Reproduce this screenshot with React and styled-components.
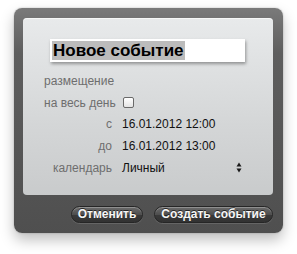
import styled, { createGlobalStyle } from "styled-components";

const GlobalStyle = createGlobalStyle`
  html, body {
    margin: 0;
    padding: 0;
    background: #ffffff;
  }
  body {
    font-family: "Liberation Sans", Arial, sans-serif;
  }
`;

const Stage = styled.div`
  width: 297px;
  height: 254px;
  padding: 8px 0 0 14px;
  box-sizing: border-box;
`;

const Sheet = styled.div`
  width: 269px;
  height: 225px;
  box-sizing: border-box;
  padding: 10px 10px 0 9px;
  border-radius: 8px;
  background: linear-gradient(#7a7a7a, #5e5e5e 20%, #4f4f4f);
  box-shadow: 0 7px 14px rgba(0, 0, 0, 0.25), 0 0 2px rgba(0, 0, 0, 0.25);
  display: flex;
  flex-direction: column;
`;

const Panel = styled.div`
  height: 177px;
  box-sizing: border-box;
  padding: 21px 28px 0 21px;
  border-radius: 4px;
  background: linear-gradient(#e8eaeb, #d4d6d7 60%, #c9cbcc);
  box-shadow: inset 0 1px 0 rgba(255, 255, 255, 0.6);
`;

const TitleField = styled.div`
  margin-left: 6px;
  height: 23px;
  background: #ffffff;
  box-shadow: 1px 2px 3px rgba(0, 0, 0, 0.35);
  display: flex;
  align-items: center;
  padding-left: 2px;
`;

const Selection = styled.span`
  background: #bcbcbc;
  color: #000;
  font-weight: 700;
  font-size: 17px;
  line-height: 19px;
  padding: 0 1px;
`;

const Form = styled.div`
  margin-top: 8px;
  display: grid;
  grid-template-columns: 68px 1fr;
  grid-auto-rows: 21.75px;
  column-gap: 10px;
  align-items: center;
`;

const Label = styled.div`
  font-size: 12px;
  color: #6e6e6e;
  text-align: ${(p) => (p.$left ? "left" : "right")};
  white-space: nowrap;
  ${(p) => (p.$span ? "grid-column: 1 / 3;" : "")}
`;

const Value = styled.div`
  font-size: 12px;
  color: #111;
  display: flex;
  align-items: center;
  justify-content: space-between;
  padding-right: 3px;
`;

const Checkbox = styled.span`
  width: 9px;
  height: 9px;
  border: 1px solid #6a6a6a;
  border-radius: 2px;
  background: linear-gradient(#ffffff, #e4e4e4);
  margin-left: 1px;
`;

const Stepper = styled.svg`
  width: 6px;
  height: 11px;
`;

const Footer = styled.div`
  flex: 1;
  display: flex;
  justify-content: flex-end;
  align-items: flex-start;
  gap: 11px;
  padding-top: 11px;
`;

const Button = styled.button`
  width: ${(p) => p.$w}px;
  height: 17px;
  box-sizing: border-box;
  border-radius: 9px;
  border: 1px solid #262626;
  background: linear-gradient(#6c6c6c, #4e4e4e 50%, #3a3a3a 51%, #323232);
  box-shadow: inset 0 1px 0 rgba(255, 255, 255, 0.25), 0 1px 0 rgba(255, 255, 255, 0.12);
  color: #f6f6f6;
  font-family: "Liberation Sans", Arial, sans-serif;
  font-weight: 700;
  font-size: 12px;
  line-height: 15px;
  padding: 0;
  text-shadow: 0 -1px 0 rgba(0, 0, 0, 0.6);
`;

function App() {
  return (
    <Stage>
      <GlobalStyle />
      <Sheet>
        <Panel>
          <TitleField>
            <Selection>Новое событие</Selection>
          </TitleField>
          <Form>
            <Label $left $span>размещение</Label>
            <Label>на весь день</Label>
            <Value>
              <Checkbox />
            </Value>
            <Label>с</Label>
            <Value>16.01.2012 12:00</Value>
            <Label>до</Label>
            <Value>16.01.2012 13:00</Value>
            <Label>календарь</Label>
            <Value>
              Личный
              <Stepper viewBox="0 0 6 11">
                <path d="M3 0.5 L5.5 4.5 L0.5 4.5 Z" fill="#1a1a1a" />
                <path d="M3 10.5 L5.5 6.5 L0.5 6.5 Z" fill="#1a1a1a" />
              </Stepper>
            </Value>
          </Form>
        </Panel>
        <Footer>
          <Button $w={72}>Отменить</Button>
          <Button $w={119}>Создать событие</Button>
        </Footer>
      </Sheet>
    </Stage>
  );
}

export default App;
